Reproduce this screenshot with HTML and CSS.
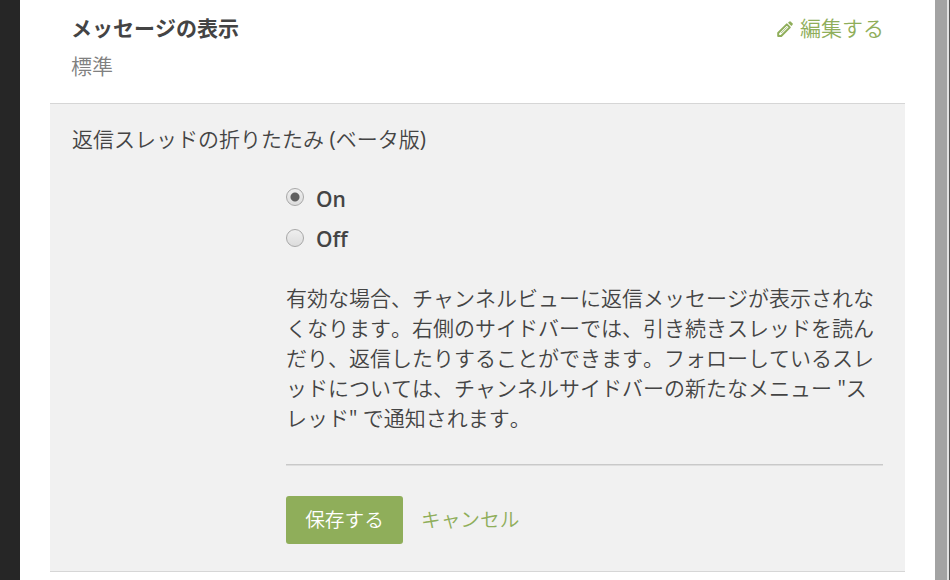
FILE: index.html
```html
<!DOCTYPE html>
<html lang="ja">
<head>
    <meta charset="UTF-8">
    <meta name="viewport" content="width=device-width, initial-scale=1.0">
    <title>表示設定</title>
    <link rel="stylesheet" href="styles.css">
</head>
<body>

<div class="page">
    <div class="backdrop"></div>

    <div class="settings">
        <!-- Message display -->
        <div class="setting-item">
            <div class="setting-header">
                <h4 class="setting-title">メッセージの表示</h4>
                <button type="button" class="edit-btn">
                    <svg class="edit-icon" viewBox="0 0 18 18" width="18" height="18">
                        <path d="M2.2 16v-3L10.8 4.4l3 3L5.2 16z" fill="none" stroke="currentColor" stroke-width="2" stroke-linejoin="round"/>
                        <path d="M5.2 13L11 7.2" stroke="currentColor" stroke-width=".8"/>
                        <path d="M12 2.8l1.1-1.1q.9-.8 1.8 0l1.5 1.5q.8.9 0 1.8l-1.1 1.1z" fill="currentColor"/>
                    </svg>
                    <span>編集する</span>
                </button>
            </div>
            <div class="setting-value">標準</div>
        </div>

        <!-- Collapsed reply threads -->
        <form class="setting-open">
            <h4 class="open-title">返信スレッドの折りたたみ<span class="latin"> (</span>ベータ版<span class="latin">)</span></h4>
            <div class="open-content">
                <label class="radio">
                    <input type="radio" name="threads" value="on" checked>
                    <span>On</span>
                </label>
                <label class="radio">
                    <input type="radio" name="threads" value="off">
                    <span>Off</span>
                </label>
                <p class="description">有効な場合、チャンネルビューに返信メッセージが表示されなくなります。右側のサイドバーでは、引き続きスレッドを読んだり、返信したりすることができます。フォローしているスレッドについては、チャンネルサイドバーの新たなメニュー<span class="latin"> "</span>スレッド<span class="latin">" </span>で通知されます。</p>
                <hr>
                <div class="actions">
                    <button type="button" class="save-btn">保存する</button>
                    <button type="button" class="cancel-btn">キャンセル</button>
                </div>
            </div>
        </form>
    </div>

    <div class="scrollbar"></div>
</div>

</body>
</html>
```
FILE: styles.css
```css
* {
    box-sizing: border-box;
}

body {
    margin: 0;
    overflow: hidden;
    font-family: "Open Sans", "Noto Sans CJK JP", sans-serif;
    font-size: 21px;
    font-weight: 350;
    font-kerning: none;
    line-height: 30px;
    color: #444;
    background: #fff;
}

button {
    padding: 0;
    border: none;
    background: none;
    font: inherit;
    font-kerning: none;
    cursor: pointer;
}

.latin {
    font-weight: 400;
}

.page {
    display: flex;
    height: 580px;
}

.backdrop {
    width: 20px;
    background: #262626;
}

.settings {
    flex: 1;
    padding: 0 30px;
}

.setting-item {
    height: 103px;
    padding: 13px 21px 0 21px;
}

.setting-header {
    display: flex;
    justify-content: space-between;
}

.setting-title {
    margin: 0;
    font-size: 21px;
    font-weight: 600;
}

.edit-btn {
    display: flex;
    align-items: center;
    gap: 6px;
    color: #8fae5a;
}

.edit-icon {
    margin-top: 2px;
}

.setting-value {
    margin-top: 8px;
    color: #808080;
}

.setting-open {
    height: 469px;
    padding: 20px 22px 0;
    background: #f1f1f1;
    border-top: 1px solid #d6d6d6;
    border-bottom: 1px solid #d6d6d6;
}

.open-title {
    margin: 0;
    font-size: 21px;
    font-weight: 350;
}

.open-content {
    margin-left: 214px;
    padding-top: 30px;
}

.radio {
    display: flex;
    align-items: center;
    height: 30px;
    margin-bottom: 10px;
    font-weight: 600;
}

.radio input {
    appearance: none;
    width: 18px;
    height: 18px;
    margin: 0 12px 3px 0;
    border: 1px solid #a8a8a8;
    border-radius: 50%;
    background: linear-gradient(#efefef, #dcdcdc);
}

.radio input:checked {
    margin-bottom: 4px;
    background: radial-gradient(circle, #606060 4px, transparent 5px), linear-gradient(#efefef, #dcdcdc);
}

.description {
    margin: 29px 0 0;
}

hr {
    height: 2px;
    margin: 31px 0 30px;
    border: none;
    border-top: 1px solid #c9c9c9;
    border-bottom: 1px solid #dedede;
}

.actions {
    display: flex;
    align-items: center;
    gap: 18px;
    font-size: 19.7px;
}

.save-btn {
    width: 117px;
    height: 48px;
    border-radius: 3px;
    color: #fff;
    background: #8fae5a;
}

.cancel-btn {
    color: #8fae5a;
}

.scrollbar {
    width: 15px;
    background: #a3a3a3;
    border-right: 1px solid #555;
    box-shadow: inset -2px 0 #e2e2e2;
}
```
